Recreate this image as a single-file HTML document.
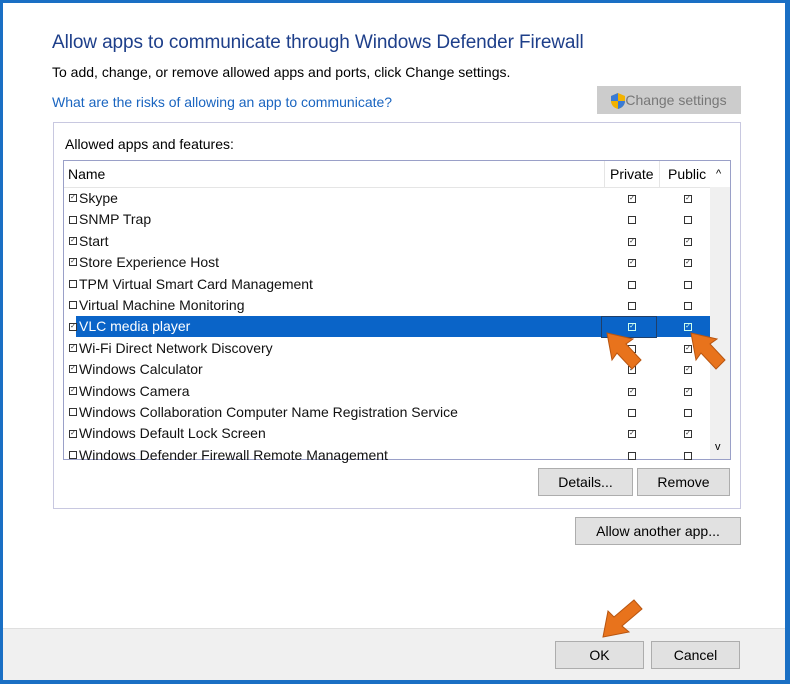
<!DOCTYPE html><html><head><style>
body{margin:0;width:790px;height:684px;overflow:hidden;background:#1a6fc4;font-family:"Liberation Sans",sans-serif;}
.win{position:absolute;left:3px;top:3px;width:782px;height:676px;background:#fff;}
.foot{position:absolute;left:0;top:625px;width:782px;height:51px;background:#f0f0f0;border-top:1px solid #dfdfdf;}
.a{position:absolute;white-space:nowrap;}
.btn{position:absolute;background:#e1e1e1;border:1px solid #adadad;font-size:14px;color:#000;text-align:center;box-sizing:border-box;}
.row{position:absolute;left:64px;width:646px;height:21px;font-size:14px;color:#111;line-height:21px;}
.cb{display:inline-block;width:6px;height:6px;border:1px solid #333;margin:0 2px 2px 3px;vertical-align:middle;font-size:7px;line-height:6px;text-align:center;}
.c{position:absolute;top:7px;width:6px;height:6px;border:1px solid #333;font-size:7px;line-height:6px;text-align:center;}
</style></head><body><div class="win">
<div class="a" style="left:49px;top:29px;font-size:19px;letter-spacing:-0.1px;color:#1e3f8a;">Allow apps to communicate through Windows Defender Firewall</div>
<div class="a" style="left:49px;top:61px;font-size:14px;color:#000;">To add, change, or remove allowed apps and ports, click Change settings.</div>
<div class="a" style="left:49px;top:91px;font-size:14px;color:#1a65c0;">What are the risks of allowing an app to communicate?</div>
<div class="btn" style="left:594px;top:83px;width:144px;height:28px;background:#ccc;border-color:#ccc;color:#777;line-height:26px;padding-left:14px;">Change settings</div>
<svg class="a" style="left:606px;top:89px" width="18" height="18"><path d="M9 1L2 4v5c0 4 3 7 7 8 4-1 7-4 7-8V4z" fill="#f2b200"/><path d="M9 1L2 4v5h7zM9 9v8c4-1 7-4 7-8z" fill="#3a7bd5"/></svg>
<div class="a" style="left:50px;top:119px;width:686px;height:385px;border:1px solid #c8c8e0;"></div>
<div class="a" style="left:62px;top:133px;font-size:14px;color:#000;">Allowed apps and features:</div>
<div class="a" style="left:60px;top:157px;width:666px;height:298px;border:1px solid #9aa0c8;overflow:hidden;">
<div class="a" style="left:0;top:0;width:666px;height:26px;border-bottom:1px solid #e5e5e5;font-size:14px;line-height:26px;">
<span class="a" style="left:4px">Name</span><span class="a" style="left:540px;border-left:1px solid #e5e5e5;padding-left:5px;">Private</span><span class="a" style="left:595px;border-left:1px solid #e5e5e5;padding-left:8px;">Public</span><span class="a" style="left:652px;font-size:11px;">^</span></div>
<div class="a" style="left:646px;top:26px;width:20px;height:272px;background:#f0f0f0;"></div>
<div class="a" style="left:651px;top:280px;font-size:11px;">v</div>
</div>
<div class="a" style="left:73px;top:313px;width:634px;height:21px;background:#0a64c8;"></div>
<div class="a" style="left:598px;top:313px;width:54px;height:20px;border:1px solid #1f3f6a;"></div>
<div id="rows"></div>
<div class="btn" style="left:535px;top:465px;width:95px;height:28px;line-height:26px;">Details...</div>
<div class="btn" style="left:634px;top:465px;width:93px;height:28px;line-height:26px;">Remove</div>
<div class="btn" style="left:572px;top:514px;width:166px;height:28px;line-height:26px;">Allow another app...</div>
<div class="foot"></div>
<div class="btn" style="left:552px;top:638px;width:89px;height:28px;line-height:26px;">OK</div>
<div class="btn" style="left:648px;top:638px;width:89px;height:28px;line-height:26px;">Cancel</div>
<svg class="a" style="left:598px;top:326px" width="140" height="50"><path d="M6 4l26 6-7 5 15 16-9 9-15-16-5 7z" fill="#e8731c" stroke="#b85510" stroke-width="1"/><path d="M90 4l26 6-7 5 15 16-9 9-15-16-5 7z" fill="#e8731c" stroke="#b85510" stroke-width="1"/></svg>
<svg class="a" style="left:596px;top:594px" width="48" height="44"><path d="M4 40l5-26 6 6 20-17 8 9-20 17 7 6z" fill="#e8731c" stroke="#b85510" stroke-width="1"/></svg>
</div>
<script>
var d=[["Skype",1,1,1],["SNMP Trap",0,0,0],["Start",1,1,1],["Store Experience Host",1,1,1],["TPM Virtual Smart Card Management",0,0,0],["Virtual Machine Monitoring",0,0,0],["VLC media player",1,1,1],["Wi-Fi Direct Network Discovery",1,0,1],["Windows Calculator",1,1,1],["Windows Camera",1,1,1],["Windows Collaboration Computer Name Registration Service",0,0,0],["Windows Default Lock Screen",1,1,1],["Windows Defender Firewall Remote Management",0,0,0]];
var h="";d.forEach(function(r,i){var y=185+i*21.4;var sel=i==6;var col=sel?"#fff":"#111";var bc=sel?"#cfe":"#333";
h+='<div class="row" style="top:'+y+'px;color:'+col+';"><span class="cb" style="border-color:#333;color:#333;margin-left:2px">'+(r[1]?'✓':'')+'</span>'+r[0]+
'<span class="c" style="left:561px;border-color:'+bc+';color:'+bc+'">'+(r[2]?'✓':'')+'</span><span class="c" style="left:617px;border-color:'+bc+';color:'+bc+'">'+(r[3]?'✓':'')+'</span></div>';});
document.getElementById("rows").innerHTML=h;
</script>
</body></html>
